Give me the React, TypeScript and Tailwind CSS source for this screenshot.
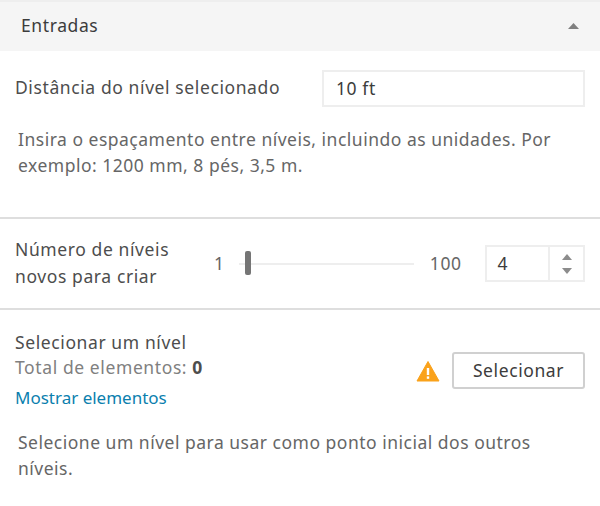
const fontStack = { fontFamily: '"Noto Sans", sans-serif' }

const Divider = () => <div className="h-[2px] bg-[#dedede]" />

const WarningIcon = () => (
    <svg width="24" height="22" viewBox="0 0 24 22">
        <path d="M12 1.5 L23 21 L1 21 Z" fill="#faa21b" stroke="#faa21b" strokeWidth="1" strokeLinejoin="round" />
        <rect x="10.8" y="8" width="2.4" height="7" fill="#fff" />
        <rect x="10.8" y="16.4" width="2.4" height="2.4" fill="#fff" />
    </svg>
)

export default function App() {
    return (
        <div className="w-[600px] h-[506px] bg-white overflow-hidden text-[17.5px] tracking-[0.6px] text-[#4d4d4d]" style={fontStack}>
            <div className="h-[51px] bg-[#f5f5f5] border-t-2 border-[#eeeeee] flex items-center justify-between pl-[21px] pr-[21px]">
                <span className="text-[#3c3c3c] -mt-[2px]">Entradas</span>
                <svg width="11" height="6" viewBox="0 0 11 6" className="-mt-[1px]">
                    <path d="M5.5 0 L11 6 L0 6 Z" fill="#808080" />
                </svg>
            </div>

            <div className="h-[166px] pt-[19px]">
                <div className="flex items-center pl-[15px] pr-[15px]">
                    <span className="w-[307px] -mt-[2px]">Distância do nível selecionado</span>
                    <div className="w-[263px] h-[37px] border-2 border-[#eeeeee] flex items-center pl-[12px] text-[#3c3c3c]">
                        10 ft
                    </div>
                </div>
                <p className="pl-[18px] pr-[30px] mt-[19px] leading-[26px] tracking-[0.5px] text-[#666666]">
                    Insira o espaçamento entre níveis, incluindo as unidades. Por exemplo: 1200 mm, 8 pés, 3,5 m.
                </p>
            </div>
            <Divider />

            <div className="h-[89px] flex items-center pl-[15px] pr-[15px]">
                <div className="w-[200px] leading-[27px] -mt-[1px]">
                    Número de níveis<br />novos para criar
                </div>
                <span className="text-[#666666] w-[23px]">1</span>
                <div className="relative w-[176px] h-[2px] bg-[#eeeeee] ml-[2px]">
                    <div className="absolute left-[6px] -top-[12px] w-[6px] h-[24px] rounded-[2px] bg-[#757575]" />
                </div>
                <span className="text-[#666666] ml-[16px] w-[55px]">100</span>
                <div className="w-[101px] h-[37px] border-2 border-[#eeeeee] flex">
                    <div className="flex-1 flex items-center pl-[11px] text-[#3c3c3c]">4</div>
                    <div className="w-[35px] border-l-2 border-[#eeeeee] flex flex-col items-center justify-center gap-[8px]">
                        <svg width="10" height="6" viewBox="0 0 10 6"><path d="M5 0 L10 6 L0 6 Z" fill="#8c8c8c" /></svg>
                        <svg width="10" height="6" viewBox="0 0 10 6"><path d="M0 0 L10 0 L5 6 Z" fill="#8c8c8c" /></svg>
                    </div>
                </div>
            </div>
            <Divider />

            <div className="flex items-center justify-between pl-[15px] pr-[15px] pt-[20px]">
                <div>
                    <div className="leading-[25px]">Selecionar um nível</div>
                    <div className="leading-[25px] text-[#808080]">
                        Total de elementos: <span className="font-bold text-[#4d4d4d]">0</span>
                    </div>
                    <div className="mt-[2px] leading-[32px] tracking-normal text-[17px] text-[#0b7fae]">Mostrar elementos</div>
                </div>
                <div className="flex items-center gap-[12px] -mt-[3px]">
                    <WarningIcon />
                    <div className="w-[133px] h-[37px] border-2 border-[#d0d0d0] rounded-[3px] flex items-center justify-center text-[#3c3c3c]">
                        Selecionar
                    </div>
                </div>
            </div>
            <p className="pl-[18px] pr-[30px] mt-[15px] leading-[26px] tracking-[0.5px] text-[#666666]">
                Selecione um nível para usar como ponto inicial dos outros níveis.
            </p>
        </div>
    )
}
